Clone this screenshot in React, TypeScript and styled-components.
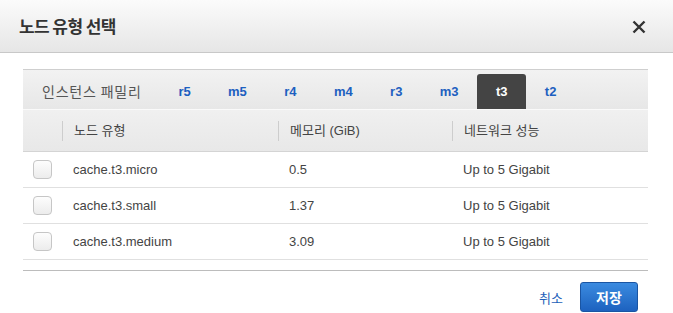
import styled, { createGlobalStyle } from "styled-components"

const GlobalStyle = createGlobalStyle`
  html, body {
    margin: 0;
    padding: 0;
    background: #fff;
  }
  body {
    font-family: "Liberation Sans", Arial, "Noto Sans CJK KR", sans-serif;
    color: #444;
  }
`

const Modal = styled.div`
  width: 673px;
  height: 313px;
  display: flex;
  flex-direction: column;
  overflow: hidden;
  background: #fff;
`

const Header = styled.div`
  height: 53px;
  flex-shrink: 0;
  display: flex;
  align-items: center;
  justify-content: space-between;
  padding: 0 27px 2px 19px;
  box-sizing: border-box;
  background: linear-gradient(#fbfbfb, #e6e6e6);
  border-bottom: 1px solid #c8c8c8;
`

const Title = styled.h1`
  margin: 0;
  font-family: "Noto Sans CJK KR", sans-serif;
  font-size: 17px;
  font-weight: 700;
  letter-spacing: -0.6px;
  color: #333;
`

const Close = styled.button`
  width: 14px;
  height: 14px;
  padding: 0;
  border: none;
  background: none;
  cursor: pointer;
  display: flex;
  margin-top: 4px;
`

const Body = styled.div`
  padding: 16px 25px 0 23px;
`

const Table = styled.div`
  border-top: 1px solid #cfcfcf;
`

const TabBar = styled.div`
  height: 35px;
  padding-top: 4px;
  display: flex;
  align-items: stretch;
  background: linear-gradient(#f2f2f2, #e7e7e7);
  border-bottom: 1px solid #fafafa;
`

const TabLabel = styled.div`
  display: flex;
  align-items: center;
  padding: 0 18px 2px 19px;
  font-family: "Noto Sans CJK KR", sans-serif;
  font-size: 14px;
  letter-spacing: 0.8px;
  color: #555;
`

const Tab = styled.div<{ active?: boolean }>`
  display: flex;
  align-items: center;
  padding: 0 18.7px 1px;
  font-size: 13px;
  font-weight: 700;
  border-radius: 3px 3px 0 0;
  cursor: pointer;
  color: ${p => p.active ? "#fff" : "#1d60c0"};
  background: ${p => p.active ? "#444" : "transparent"};
`

const Grid = styled.div`
  display: grid;
  grid-template-columns: 39px 216px 174px 1fr;
`

const HeadRow = styled(Grid)`
  height: 41px;
  background: linear-gradient(#f0f0f0, #e8e8e8);
  border-bottom: 1px solid #d4d4d4;
`

const HeadCell = styled.div`
  display: flex;
  align-items: center;
`

const HeadLabel = styled.span`
  height: 20px;
  line-height: 20px;
  padding-left: 11px;
  border-left: 1px solid #cdcdcd;
  font-family: "Liberation Sans", Arial, "Noto Sans CJK KR", sans-serif;
  font-size: 13px;
  color: #444;
`

const Row = styled(Grid)`
  height: 35px;
  border-bottom: 1px solid #e0e0e0;
`

const Cell = styled.div`
  display: flex;
  align-items: center;
  padding: 0 0 1px 11px;
  font-size: 13px;
  color: #444;
`

const CheckCell = styled.div`
  display: flex;
  align-items: center;
  padding-left: 10px;
`

const Check = styled.span`
  width: 17px;
  height: 17px;
  border: 1px solid #c6c6c6;
  border-radius: 4px;
  background: linear-gradient(#fdfdfd, #ececec);
`

const Footer = styled.div`
  margin-top: 10px;
  border-top: 1px solid #bcbcbc;
  padding: 11px 10px 0 0;
  display: flex;
  justify-content: flex-end;
  align-items: center;
  gap: 17px;
`

const Cancel = styled.a`
  font-family: "Noto Sans CJK KR", sans-serif;
  font-size: 13px;
  color: #1d5fb9;
  cursor: pointer;
`

const Save = styled.button`
  width: 58px;
  height: 30px;
  border: 1px solid #1a55a3;
  border-radius: 3px;
  background: linear-gradient(#3b8be0, #1d62bf);
  color: #fff;
  font-family: "Noto Sans CJK KR", sans-serif;
  font-size: 14px;
  font-weight: 700;
  cursor: pointer;
`

const families = ["r5", "m5", "r4", "m4", "r3", "m3", "t3", "t2"]

const nodes = [
  { name: "cache.t3.micro", mem: "0.5", net: "Up to 5 Gigabit" },
  { name: "cache.t3.small", mem: "1.37", net: "Up to 5 Gigabit" },
  { name: "cache.t3.medium", mem: "3.09", net: "Up to 5 Gigabit" },
]

export default function App() {
  return (
    <>
      <GlobalStyle />
      <Modal>
        <Header>
          <Title>노드 유형 선택</Title>
          <Close aria-label="닫기">
            <svg width="14" height="14" viewBox="0 0 14 14">
              <path d="M1.5 1.5 L12.5 12.5 M12.5 1.5 L1.5 12.5" stroke="#333" strokeWidth="2.4" />
            </svg>
          </Close>
        </Header>
        <Body>
          <Table>
            <TabBar>
              <TabLabel>인스턴스 패밀리</TabLabel>
              {families.map(f => (
                <Tab key={f} active={f === "t3"}>{f}</Tab>
              ))}
            </TabBar>
            <HeadRow>
              <HeadCell />
              <HeadCell><HeadLabel>노드 유형</HeadLabel></HeadCell>
              <HeadCell><HeadLabel>메모리 (GiB)</HeadLabel></HeadCell>
              <HeadCell><HeadLabel>네트워크 성능</HeadLabel></HeadCell>
            </HeadRow>
            {nodes.map(n => (
              <Row key={n.name}>
                <CheckCell><Check /></CheckCell>
                <Cell>{n.name}</Cell>
                <Cell>{n.mem}</Cell>
                <Cell>{n.net}</Cell>
              </Row>
            ))}
          </Table>
          <Footer>
            <Cancel>취소</Cancel>
            <Save>저장</Save>
          </Footer>
        </Body>
      </Modal>
    </>
  )
}
